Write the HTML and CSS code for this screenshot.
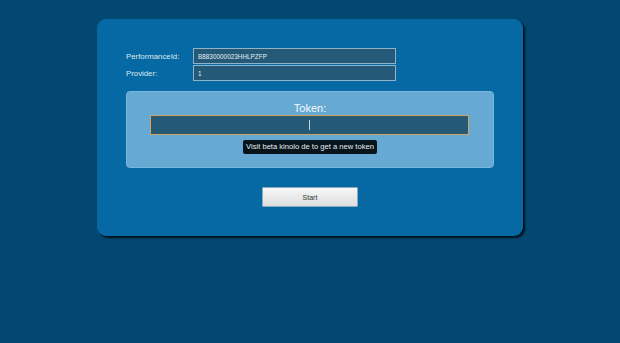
FILE: index.html
```html
<!DOCTYPE html>
<html lang="en">
<head>
    <meta charset="UTF-8">
    <meta name="viewport" content="width=device-width, initial-scale=1.0">
    <title>Start Performance</title>
    <link rel="stylesheet" href="styles.css">
</head>
<body>
    <div class="card">
        <div class="row">
            <label class="label" for="performanceId">PerformanceId:</label>
            <input class="field" id="performanceId" type="text" value="B8830000023HHLPZFP">
        </div>
        <div class="row">
            <label class="label" for="provider">Provider:</label>
            <input class="field" id="provider" type="text" value="1">
        </div>

        <!-- Token box -->
        <div class="token-box">
            <div class="token-title">Token:</div>
            <div class="token-wrap">
                <input class="token-input" id="token" type="text">
                <span class="caret"></span>
            </div>
            <div class="hint">Visit beta kinolo de to get a new token</div>
        </div>

        <div class="actions">
            <button class="start" id="start">Start</button>
        </div>
    </div>
</body>
</html>
```

FILE: styles.css
```css
body {
    margin: 0;
    background-color: #034870;
    font-family: "Liberation Sans", Arial, sans-serif;
    height: 343px;
}

.card {
    width: 368px;
    margin: 19px auto 0;
    padding: 29px 29px 29px;
    background-color: #0669a3;
    border-radius: 9px;
    box-shadow: 2px 2px 2px #01121d;
}

.row {
    display: flex;
    align-items: center;
    margin-bottom: 1px;
}

.label {
    width: 67px;
    color: #dde9f2;
    font-size: 7.8px;
}

.field {
    box-sizing: border-box;
    width: 203px;
    height: 16px;
    margin: 0;
    padding: 0 4px;
    background-color: #245a78;
    border: 1px solid #8fb4c9;
    color: #e6eef3;
    font-family: "Liberation Sans", Arial, sans-serif;
    font-size: 6.4px;
}

.token-box {
    box-sizing: border-box;
    height: 77px;
    margin-top: 10px;
    padding-top: 10px;
    background-color: #66aad4;
    border: 1px solid #78b6dc;
    border-radius: 4px;
    text-align: center;
}

.token-title {
    color: #f4f9fc;
    font-size: 11px;
    line-height: 12px;
}

.token-wrap {
    position: relative;
    margin: 1px 24px 0 23px;
}

.token-input {
    display: block;
    box-sizing: border-box;
    width: 100%;
    height: 20px;
    margin: 0;
    background-color: #245a78;
    border: 1px solid #c6a66a;
    box-shadow: inset 0 0 0 1px #2f5a66;
    outline: none;
}

.caret {
    position: absolute;
    left: 159px;
    top: 5px;
    width: 1px;
    height: 10px;
    background-color: #c9d6de;
}

.hint {
    display: inline-block;
    margin-top: 5px;
    padding: 2px 3px 2px;
    background-color: #07141c;
    border-radius: 2px;
    color: #e8ecef;
    font-size: 7.6px;
    line-height: 10px;
}

.actions {
    display: flex;
    justify-content: center;
    margin-top: 19px;
}

.start {
    width: 96px;
    height: 20px;
    padding: 0;
    background: linear-gradient(#f7f7f7, #dedede);
    border: 1px solid #8aaac0;
    border-radius: 1px;
    color: #333;
    font-family: "Liberation Sans", Arial, sans-serif;
    font-size: 7px;
}
```
